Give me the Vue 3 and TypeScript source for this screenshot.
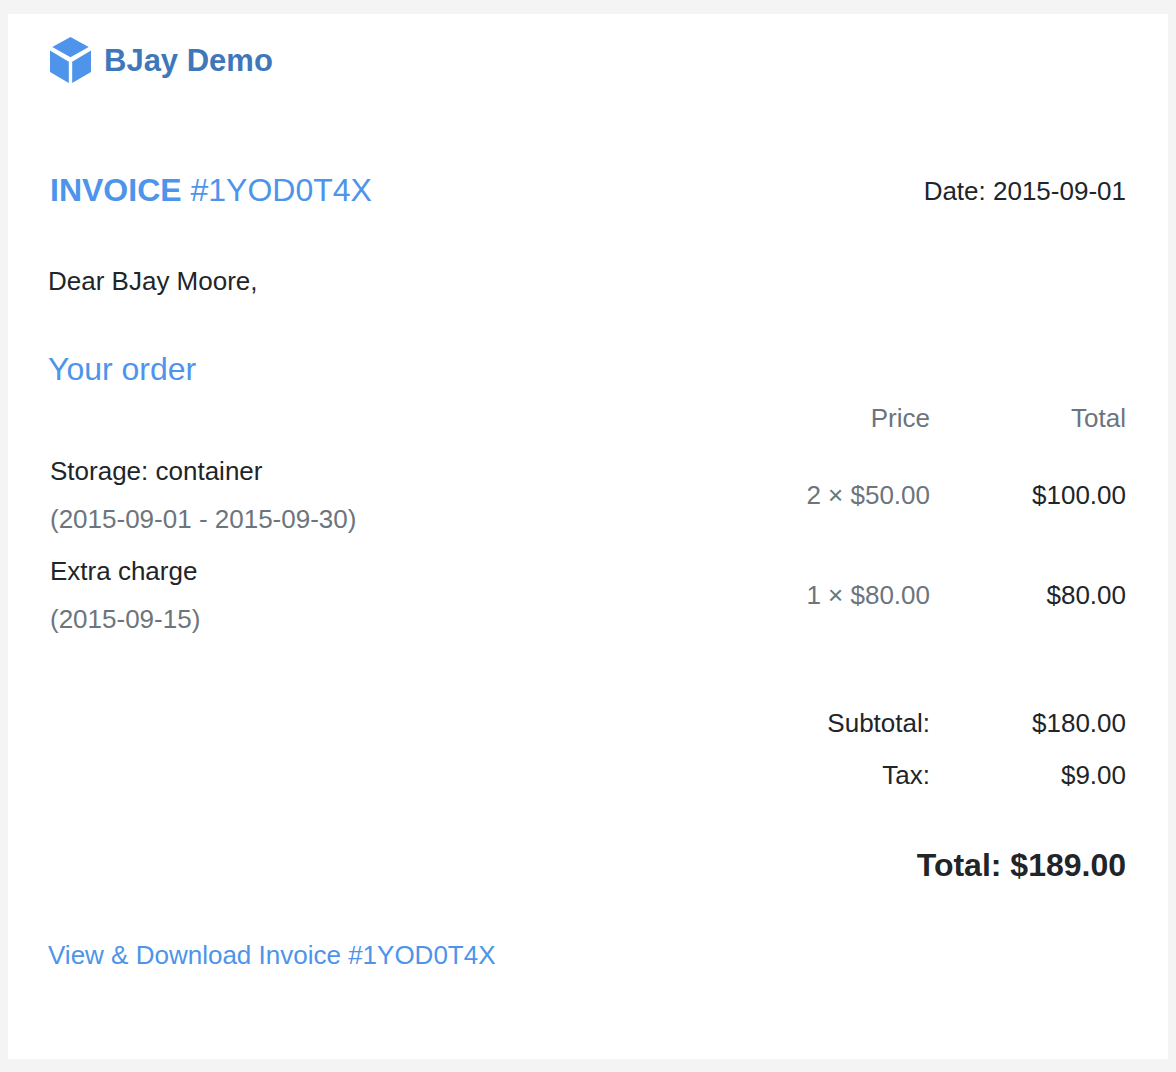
<script setup lang="ts">
interface Line {
  name: string
  period: string
  price: string
  total: string
}
const lines: Line[] = [
  { name: 'Storage: container', period: '(2015-09-01 - 2015-09-30)', price: '2 × $50.00', total: '$100.00' },
  { name: 'Extra charge', period: '(2015-09-15)', price: '1 × $80.00', total: '$80.00' },
]
</script>

<template>
  <div class="page">
    <main class="card">
      <header class="brand">
        <svg class="logo" viewBox="0 0 42 46" width="42" height="46" aria-hidden="true">
          <path d="M20.5 0 L38.7 10 L20.5 20.3 L2.3 10 Z" fill="#4d94ea" />
          <path d="M0 13.5 L18.8 24.8 L18.8 46 L0 35 Z" fill="#4d94ea" />
          <path d="M22.2 24.8 L41 13.5 L41 35 L22.2 46 Z" fill="#4d94ea" />
        </svg>
        <span class="brand-name">BJay Demo</span>
      </header>

      <div class="title-row">
        <h1 class="title"><strong>INVOICE</strong> #1YOD0T4X</h1>
        <div class="date">Date: 2015-09-01</div>
      </div>

      <p class="greeting">Dear BJay Moore,</p>

      <h2 class="section">Your order</h2>

      <div class="table">
        <div class="head">
          <span></span>
          <span>Price</span>
          <span>Total</span>
        </div>
        <div v-for="line in lines" :key="line.name" class="row">
          <div class="item">
            <div>{{ line.name }}</div>
            <div class="muted">{{ line.period }}</div>
          </div>
          <div class="muted num">{{ line.price }}</div>
          <div class="num">{{ line.total }}</div>
        </div>
      </div>

      <div class="sums">
        <div class="sum"><span>Subtotal:</span><span>$180.00</span></div>
        <div class="sum"><span>Tax:</span><span>$9.00</span></div>
      </div>

      <div class="grand">Total: $189.00</div>

      <a class="link" href="#">View &amp; Download Invoice #1YOD0T4X</a>
    </main>
  </div>
</template>

<style>
html, body { background: #f5f4f5; }
</style>

<style scoped>
.page {
  height: 1072px;
  box-sizing: border-box;
  padding: 14px 8px 13px;
  background: #f5f4f5;
  font-family: "Liberation Sans", Arial, sans-serif;
  font-size: 26px;
  color: #212529;
}
.card {
  height: 100%;
  box-sizing: border-box;
  background: #fff;
  padding: 23px 42px 0 40px;
}
.brand { display: flex; align-items: center; height: 46px; padding-left: 2px; }
.logo { display: block; flex: none; }
.brand-name {
  margin-left: 12px;
  padding-top: 2px;
  font-size: 31px;
  font-weight: 700;
  color: #3f77bb;
  line-height: 46px;
}
.title-row {
  display: flex;
  justify-content: space-between;
  align-items: center;
  margin-top: 84px;
  padding-left: 2px;
  height: 46px;
}
.title { margin: 0; font-size: 32px; font-weight: 400; color: #4d94ea; line-height: 46px; }
.title strong { font-weight: 700; }
.date { line-height: 46px; padding-top: 1px; }
.greeting { margin: 45px 0 0; line-height: 46px; }
.section { margin: 42px 0 0; font-size: 32px; font-weight: 400; color: #4d94ea; line-height: 46px; }
.table { margin-top: 6px; }
.head, .row, .sum {
  display: grid;
  grid-template-columns: 1fr 196px;
}
.head, .row { grid-template-columns: 1fr 300px 196px; }
.head { line-height: 40px; color: #6c757d; text-align: right; height: 47px; }
.row { height: 100px; align-items: center; padding-left: 2px; }
.item { line-height: 48px; }
.num { text-align: right; }
.muted { color: #6c757d; }
.sums { margin-top: 52px; }
.sum { height: 52px; line-height: 52px; text-align: right; }
.grand {
  margin-top: 41px;
  font-size: 32px;
  font-weight: 700;
  text-align: right;
  line-height: 46px;
}
.link {
  display: block;
  margin-top: 44px;
  color: #4d94ea;
  text-decoration: none;
  line-height: 46px;
}
</style>
